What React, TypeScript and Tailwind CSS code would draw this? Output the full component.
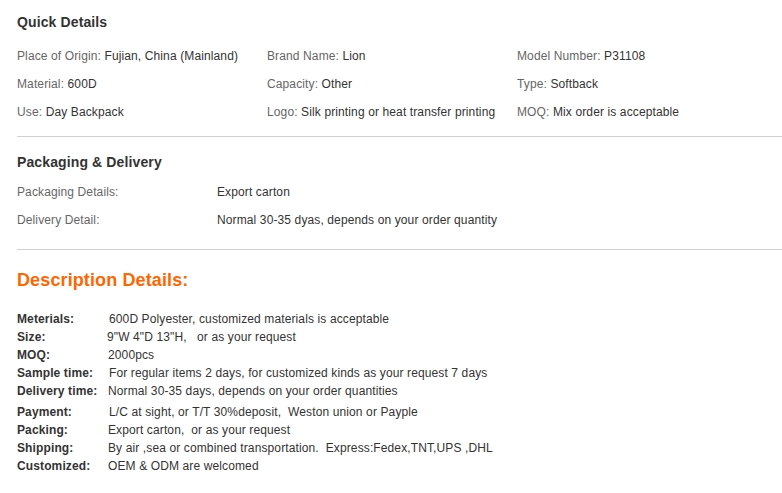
export default function App() {
  const quick = [
    ["Place of Origin:", "Fujian, China (Mainland)"],
    ["Brand Name:", "Lion"],
    ["Model Number:", "P31108"],
    ["Material:", "600D"],
    ["Capacity:", "Other"],
    ["Type:", "Softback"],
    ["Use:", "Day Backpack"],
    ["Logo:", "Silk printing or heat transfer printing"],
    ["MOQ:", "Mix order is acceptable"],
  ];

  const packaging = [
    ["Packaging Details:", "Export carton"],
    ["Delivery Detail:", "Normal 30-35 dyas, depends on your order quantity"],
  ];

  const desc = [
    { label: "Meterials:", value: "600D Polyester, customized materials is acceptable", pad: "pl-px" },
    { label: "Size:", value: "9\"W 4\"D 13\"H,   or as your request", pad: "-ml-px" },
    { label: "MOQ:", value: "2000pcs", pad: "" },
    { label: "Sample time:", value: "For regular items 2 days, for customized kinds as your request 7 days", pad: "pl-px" },
    { label: "Delivery time:", value: "Normal 30-35 days, depends on your order quantities", pad: "" },
    { label: "Payment:", value: "L/C at sight, or T/T 30%deposit,  Weston union or Payple", pad: "pl-px", gap: true },
    { label: "Packing:", value: "Export carton,  or as your request", pad: "" },
    { label: "Shipping:", value: "By air ,sea or combined transportation.  Express:Fedex,TNT,UPS ,DHL", pad: "" },
    { label: "Customized:", value: "OEM & ODM are welcomed", pad: "" },
  ];

  return (
    <div className="w-[782px] h-[493px] bg-white pl-[17px] pt-[12px] font-['Liberation_Sans',Arial,sans-serif] text-[12px] tracking-[0.12px] text-[#333] overflow-hidden">
      {/* Quick Details */}
      <h3 className="h-5 leading-5 text-[14px] font-bold text-[#333]">Quick Details</h3>
      <div className="mt-[10px] grid grid-cols-[250px_250px_250px]">
        {quick.map(([k, v], i) => (
          <div key={i} className="h-7 leading-7 whitespace-nowrap">
            <span className="text-[#666]">{k}</span> {v}
          </div>
        ))}
      </div>
      <div className="mt-[10px] h-px bg-[#d2d2d2]" />

      {/* Packaging & Delivery */}
      <h3 className="mt-[15px] h-5 leading-5 text-[14px] font-bold text-[#333]">Packaging &amp; Delivery</h3>
      <div className="mt-[6px]">
        {packaging.map(([k, v], i) => (
          <div key={i} className="h-7 leading-7 flex whitespace-nowrap">
            <span className="w-[200px] text-[#666]">{k}</span>
            <span>{v}</span>
          </div>
        ))}
      </div>
      <div className="mt-[15px] h-px bg-[#d2d2d2]" />

      {/* Description Details */}
      <h2 className="mt-[18px] h-6 leading-6 text-[18px] font-bold text-[#ff6600]">Description Details:</h2>
      <div className="mt-[18px]">
        {desc.map((d, i) => (
          <div key={i} className={`flex h-[18px] leading-[18px] whitespace-pre ${d.gap ? "mt-[3px]" : ""}`}>
            <span className="w-[91px] font-bold">{d.label}</span>
            <span className={d.pad}>{d.value}</span>
          </div>
        ))}
      </div>
    </div>
  );
}
